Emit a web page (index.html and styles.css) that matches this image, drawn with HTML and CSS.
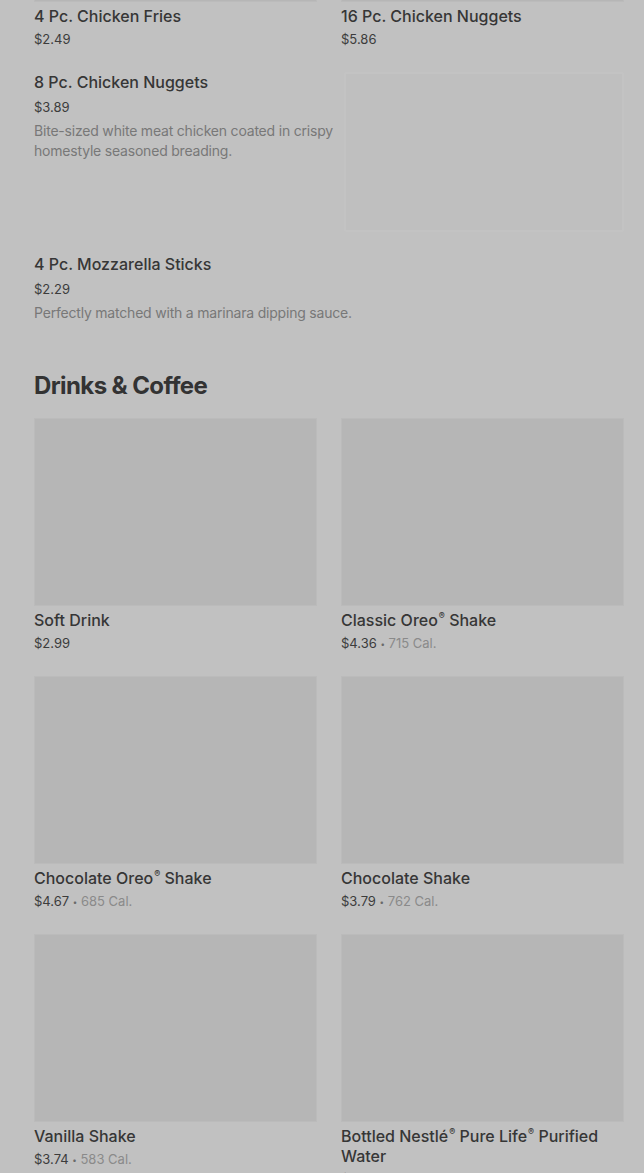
FILE: index.html
```html
<!DOCTYPE html>
<html>
<head>
<meta charset="utf-8">
<link rel="stylesheet" href="styles.css">
</head>
<body>
<main class="page">
  <section class="grid top-grid">
    <div class="card">
      <div class="thumb"></div>
      <div class="name">4 Pc. Chicken Fries</div>
      <div class="meta">$2.49</div>
    </div>
    <div class="card">
      <div class="thumb"></div>
      <div class="name">16 Pc. Chicken Nuggets</div>
      <div class="meta">$5.86</div>
    </div>
  </section>

  <section class="list">
    <div class="row">
      <div class="row-text">
        <div class="name">8 Pc. Chicken Nuggets</div>
        <div class="meta">$3.89</div>
        <div class="desc">Bite-sized white meat chicken coated in crispy homestyle seasoned breading.</div>
      </div>
      <div class="row-img"></div>
    </div>
    <div class="row row-noimg">
      <div class="row-text">
        <div class="name">4 Pc. Mozzarella Sticks</div>
        <div class="meta">$2.29</div>
        <div class="desc">Perfectly matched with a marinara dipping sauce.</div>
      </div>
    </div>
  </section>

  <h2 class="heading">Drinks &amp; Coffee</h2>

  <section class="grid">
    <div class="card">
      <div class="thumb"></div>
      <div class="name">Soft Drink</div>
      <div class="meta">$2.99</div>
    </div>
    <div class="card">
      <div class="thumb"></div>
      <div class="name">Classic Oreo<span class="reg">®</span> Shake</div>
      <div class="meta">$4.36 <span class="dot">•</span> <span class="cal">715 Cal.</span></div>
    </div>
    <div class="card">
      <div class="thumb"></div>
      <div class="name">Chocolate Oreo<span class="reg">®</span> Shake</div>
      <div class="meta">$4.67 <span class="dot">•</span> <span class="cal">685 Cal.</span></div>
    </div>
    <div class="card">
      <div class="thumb"></div>
      <div class="name">Chocolate Shake</div>
      <div class="meta">$3.79 <span class="dot">•</span> <span class="cal">762 Cal.</span></div>
    </div>
    <div class="card">
      <div class="thumb"></div>
      <div class="name">Vanilla Shake</div>
      <div class="meta">$3.74 <span class="dot">•</span> <span class="cal">583 Cal.</span></div>
    </div>
    <div class="card">
      <div class="thumb"></div>
      <div class="name">Bottled Nestlé<span class="reg">®</span> Pure Life<span class="reg">®</span> Purified Water</div>
      <div class="meta">$1.99</div>
    </div>
  </section>
</main>
</body>
</html>
```

FILE: styles.css
```css
* { box-sizing: border-box; }
html, body { margin: 0; padding: 0; }
body {
  background: #c1c1c1;
  font-family: Inter, "Noto Sans", sans-serif;
  color: #363636;
  overflow: hidden;
}
.page {
  padding: 0 20px 0 34px;
  margin-top: -186px;
}
.grid {
  display: grid;
  grid-template-columns: 1fr 1fr;
  column-gap: 24px;
  row-gap: 23px;
}
.card { display: flex; flex-direction: column; }
.thumb {
  height: 188px;
  background: #b6b6b6;
  border: 1px solid #bbbbbb;
  margin-bottom: 4px;
}
.name {
  font-size: 16px;
  line-height: 20px;
  font-weight: 500;
  color: #363636;
}
.reg {
  font-size: 9px;
  line-height: 1;
  vertical-align: top;
  position: relative;
  top: 1px;
  margin-left: 1px;
}
.meta {
  margin-top: 3px;
  font-size: 13px;
  line-height: 20px;
  color: #3c3c3c;
}
.dot {
  color: #6a6a6a;
  font-size: 8px;
  line-height: 1;
  vertical-align: middle;
}
.cal { color: #8a8a8a; }
.list {
  margin-top: 23px;
  display: flex;
  flex-direction: column;
  gap: 22px;
}
.row { display: flex; gap: 10px; }
.row-text { flex: 1; min-width: 0; }
.row .meta { margin-top: 5px; }
.desc {
  margin-top: 4px;
  font-size: 14px;
  line-height: 20px;
  letter-spacing: -0.2px;
  color: #787878;
}
.row-img {
  flex: 0 0 280px;
  height: 160px;
  background: #bfbfbf;
  border: 2px solid #c3c3c3;
  border-radius: 2px;
}
.heading {
  margin: 47px 0 16px;
  font-size: 24px;
  line-height: 32px;
  font-weight: 700;
  letter-spacing: -0.6px;
  color: #333;
}
```
